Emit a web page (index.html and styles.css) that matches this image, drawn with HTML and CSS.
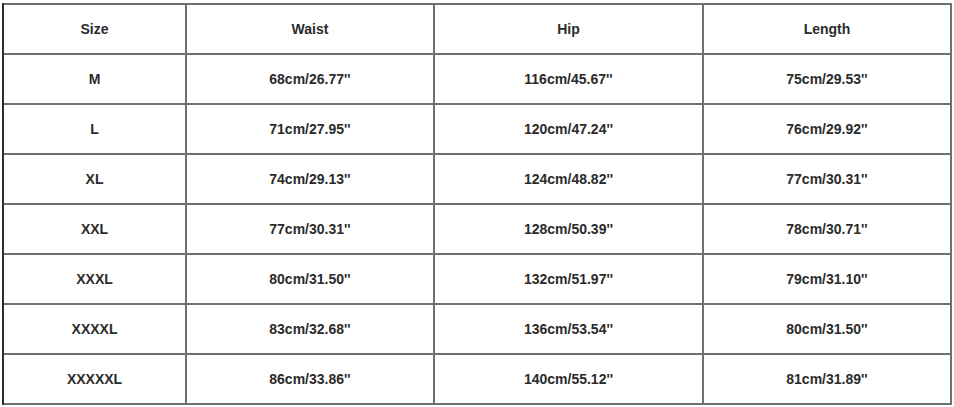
FILE: index.html
```html
<!DOCTYPE html>
<html>
<head>
<meta charset="utf-8">
<link rel="stylesheet" href="styles.css">
</head>
<body>
<div class="wrap">
  <div class="chart">
    <div class="cell">Size</div><div class="cell">Waist</div><div class="cell">Hip</div><div class="cell">Length</div>
    <div class="cell">M</div><div class="cell">68cm/26.77''</div><div class="cell">116cm/45.67''</div><div class="cell">75cm/29.53''</div>
    <div class="cell">L</div><div class="cell">71cm/27.95''</div><div class="cell">120cm/47.24''</div><div class="cell">76cm/29.92''</div>
    <div class="cell">XL</div><div class="cell">74cm/29.13''</div><div class="cell">124cm/48.82''</div><div class="cell">77cm/30.31''</div>
    <div class="cell">XXL</div><div class="cell">77cm/30.31''</div><div class="cell">128cm/50.39''</div><div class="cell">78cm/30.71''</div>
    <div class="cell">XXXL</div><div class="cell">80cm/31.50''</div><div class="cell">132cm/51.97''</div><div class="cell">79cm/31.10''</div>
    <div class="cell">XXXXL</div><div class="cell">83cm/32.68''</div><div class="cell">136cm/53.54''</div><div class="cell">80cm/31.50''</div>
    <div class="cell">XXXXXL</div><div class="cell">86cm/33.86''</div><div class="cell">140cm/55.12''</div><div class="cell">81cm/31.89''</div>
  </div>
</div>
</body>
</html>
```
FILE: styles.css
```css
html, body {
  margin: 0;
  padding: 0;
  background: #ffffff;
}
.wrap {
  padding: 3px 2px 2px 2px;
}
.chart {
  display: grid;
  grid-template-columns: 181px 246px 267px 246px;
  grid-auto-rows: 48px;
  gap: 2px;
  padding: 2px;
  width: 946px;
  background: #6f6f6f;
  border-left: 0;
  box-shadow: inset 2px 0 0 #2e2e2e;
}
.cell {
  background: #ffffff;
  display: flex;
  align-items: center;
  justify-content: center;
  font-family: "Liberation Sans", Arial, sans-serif;
  font-weight: bold;
  font-size: 14px;
  color: #2b2b2b;
}
```
